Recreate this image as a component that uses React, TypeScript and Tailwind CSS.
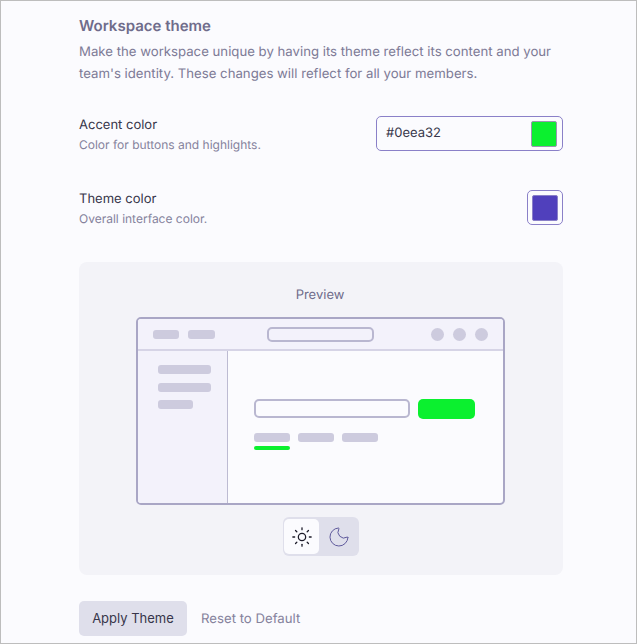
import { Moon, Sun } from "lucide-react";

const ACCENT = "#0bf02f";

function Bone({ className }: { className: string }) {
  return <div className={`h-[9px] rounded-[3px] bg-[#cdcbde] ${className}`} />;
}

function PreviewFrame() {
  return (
    <div className="flex h-[188px] w-[369px] flex-col overflow-hidden rounded-[5px] border-2 border-[#a9a6c5] bg-[#fbfbfe]">
      <div className="flex h-[32px] shrink-0 items-center border-b-2 border-[#d6d4e6] bg-[#f3f2fb] pl-[15px] pr-[15px]">
        <div className="flex w-[114px] gap-[9px]">
          <Bone className="w-[26.5px]" />
          <Bone className="w-[26.5px]" />
        </div>
        <div className="h-[15px] w-[107px] rounded-[5px] border-2 border-[#b9b7d0]" />
        <div className="ml-auto flex gap-[9px]">
          <div className="size-[13px] rounded-full bg-[#cdcbde]" />
          <div className="size-[13px] rounded-full bg-[#cdcbde]" />
          <div className="size-[13px] rounded-full bg-[#cdcbde]" />
        </div>
      </div>
      <div className="flex min-h-0 flex-1">
        <div className="flex w-[90px] shrink-0 flex-col gap-[8.5px] border-r border-[#bdbbd2] bg-[#f3f2fb] pl-[20px] pt-[14px]">
          <Bone className="w-[53px]" />
          <Bone className="w-[53px]" />
          <Bone className="w-[35px]" />
        </div>
        <div className="flex-1 pl-[26px] pt-[47.5px]">
          <div className="flex items-center gap-[8px]">
            <div className="h-[19px] w-[156px] rounded-[5px] border-2 border-[#b9b7d0]" />
            <div className="h-[20px] w-[57px] rounded-[5px]" style={{ backgroundColor: ACCENT }} />
          </div>
          <div className="mt-[14px] flex gap-[8.5px] pl-[0.5px]">
            <Bone className="w-[35.5px]" />
            <Bone className="w-[35.5px]" />
            <Bone className="w-[35.5px]" />
          </div>
          <div className="ml-[0.5px] mt-[4px] h-[4px] w-[35.5px] rounded-full" style={{ backgroundColor: ACCENT }} />
        </div>
      </div>
    </div>
  );
}

export default function App() {
  return (
    <div className="box-border h-[644px] w-[637px] overflow-hidden border border-[#bdbdbd] bg-[#fbfbfe] pl-[78px] pr-[73px] pt-[15px] font-['Inter',sans-serif] [text-rendering:geometricPrecision]">
      <h2 className="text-[15px] font-semibold leading-[20px] text-[#6f6c8b]">Workspace theme</h2>
      <p className="mt-[5px] text-[13.2px] leading-[22px] text-[#7d7a96]">
        Make the workspace unique by having its theme reflect its content and your team's identity. These changes will reflect for all your members.
      </p>

      <div className="mt-[29px] flex items-start justify-between">
        <div className="pt-px">
          <div className="text-[13px] leading-[20px] text-[#37364a]">Accent color</div>
          <div className="text-[12px] leading-[20px] text-[#85829c]">Color for buttons and highlights.</div>
        </div>
        <div className="mt-[2px] flex h-[35px] w-[187px] items-center justify-between rounded-[5px] border border-[#8a80c8] pl-[9px] pr-[5px]">
          <span className="text-[13px] text-[#37364a]">#0eea32</span>
          <div className="size-[26px] rounded-[2px] border border-[#9a96b0]" style={{ backgroundColor: ACCENT }} />
        </div>
      </div>

      <div className="mt-[33px] flex items-start justify-between">
        <div className="pt-px">
          <div className="text-[13px] leading-[20px] text-[#37364a]">Theme color</div>
          <div className="text-[12px] leading-[20px] text-[#85829c]">Overall interface color.</div>
        </div>
        <div className="mt-[2px] flex h-[35px] w-[36px] items-center justify-center rounded-[5px] border border-[#8a80c8]">
          <div className="size-[26px] rounded-[2px] border border-[#8a80c8] bg-[#5040bc]" />
        </div>
      </div>

      <div className="mt-[33px] flex h-[313px] flex-col items-center rounded-[8px] bg-[#f3f3f8] pt-[23px]">
        <div className="mr-[2px] text-[13px] leading-[20px] text-[#6f6c8b]">Preview</div>
        <div className="mr-[2px] mt-[12px]">
          <PreviewFrame />
        </div>
        <div className="mt-[12px] flex h-[39px] w-[76px] items-center rounded-[6px] bg-[#dfdfeb] py-[2px] pl-[1px]">
          <div className="flex h-[35px] w-[35px] items-center justify-center rounded-[5px] bg-[#fbfbfe]">
            <Sun size={22} strokeWidth={1.4} className="text-[#1c1b29]" />
          </div>
          <div className="flex flex-1 items-center justify-center">
            <Moon size={24} strokeWidth={1} className="text-[#5f5a9c]" />
          </div>
        </div>
      </div>

      <div className="mt-[26px] flex items-center">
        <button type="button" className="h-[35px] w-[108px] rounded-[5px] bg-[#dfdfeb] text-[13px] text-[#37364a]">
          Apply Theme
        </button>
        <span className="ml-[14px] pt-[2px] text-[13.2px] text-[#85829c]">Reset to Default</span>
      </div>
    </div>
  );
}
